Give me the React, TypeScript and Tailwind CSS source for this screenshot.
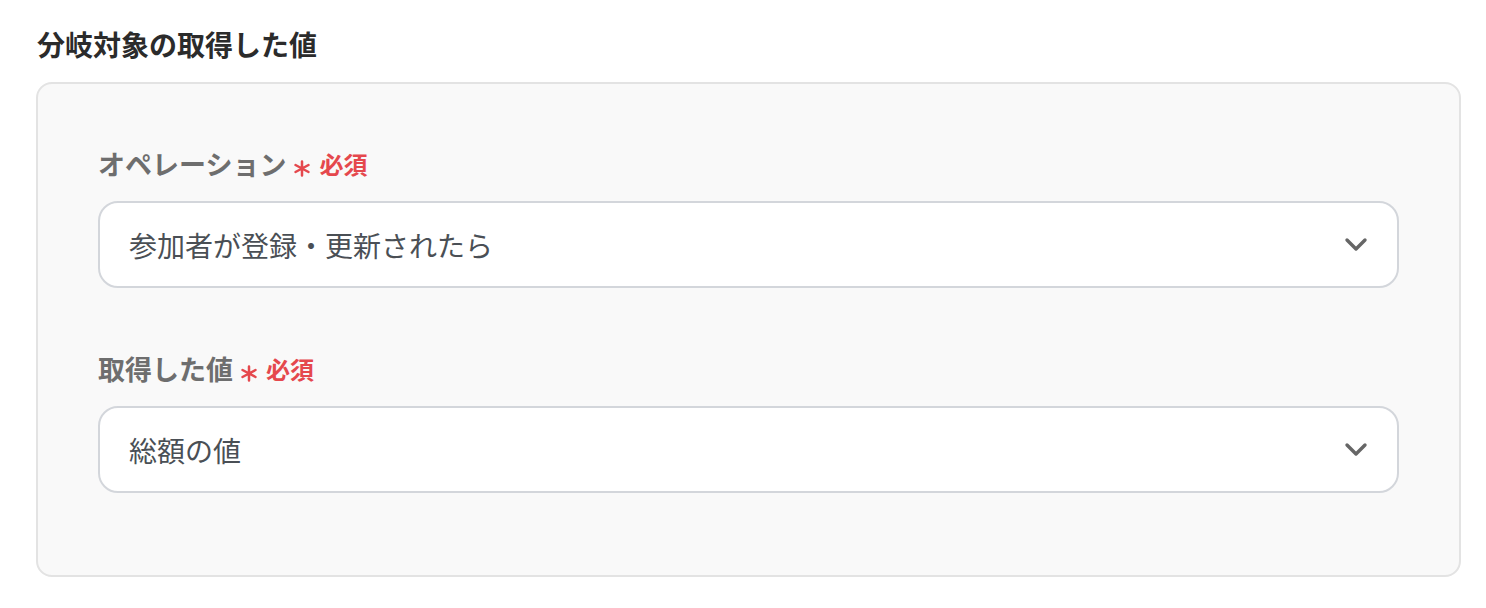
import React from 'react';

const font = { fontFamily: '"Noto Sans CJK JP", "Noto Sans", sans-serif' };

const Chevron = () => (
  <svg width="24" height="15" viewBox="0 0 24 15" fill="none" stroke="#666" strokeWidth="3.4" strokeLinecap="round" strokeLinejoin="round">
    <path d="M3 3l9 9 9-9" />
  </svg>
);

const Asterisk = () => (
  <svg width="18" height="17" viewBox="0 0 18 17" stroke="#e5484d" strokeWidth="2.5" strokeLinecap="round">
    <path d="M9 1.5v14M2.5 5l13 7M2.5 12l13-7" />
  </svg>
);

const Field: React.FC<{ label: string; value: string }> = ({ label, value }) => (
  <div className="flex flex-col">
    <div className="flex items-center h-[30px]">
      <span className="text-[27px] font-bold text-[#6e6e6e] leading-[30px]">{label}</span>
      <span className="ml-[7px] mt-[8px]"><Asterisk /></span>
      <span className="text-[#e5484d] text-[24px] font-bold leading-[30px] ml-[8px]">必須</span>
    </div>
    <div className="mt-[22px] h-[87px] bg-white border-2 border-[#d3d6db] rounded-[20px] flex items-center justify-between pl-[29px] pr-[29px]">
      <span className="text-[28px] text-[#4a4f55]">{value}</span>
      <Chevron />
    </div>
  </div>
);

export default function App() {
  return (
    <div className="w-[1486px] h-[608px] bg-white px-[36px] pt-[24px]" style={font}>
      <h2 className="text-[28px] font-bold text-[#2b2b2b] leading-[40px] ml-[1px]">分岐対象の取得した値</h2>
      <div className="mt-[18px] w-[1425px] h-[495px] bg-[#f9f9f9] border-2 border-[#e3e3e3] rounded-[16px] pl-[60px] pr-[60px] pt-[65px] flex flex-col gap-[66px]">
        <Field label="オペレーション" value="参加者が登録・更新されたら" />
        <Field label="取得した値" value="総額の値" />
      </div>
    </div>
  );
}
